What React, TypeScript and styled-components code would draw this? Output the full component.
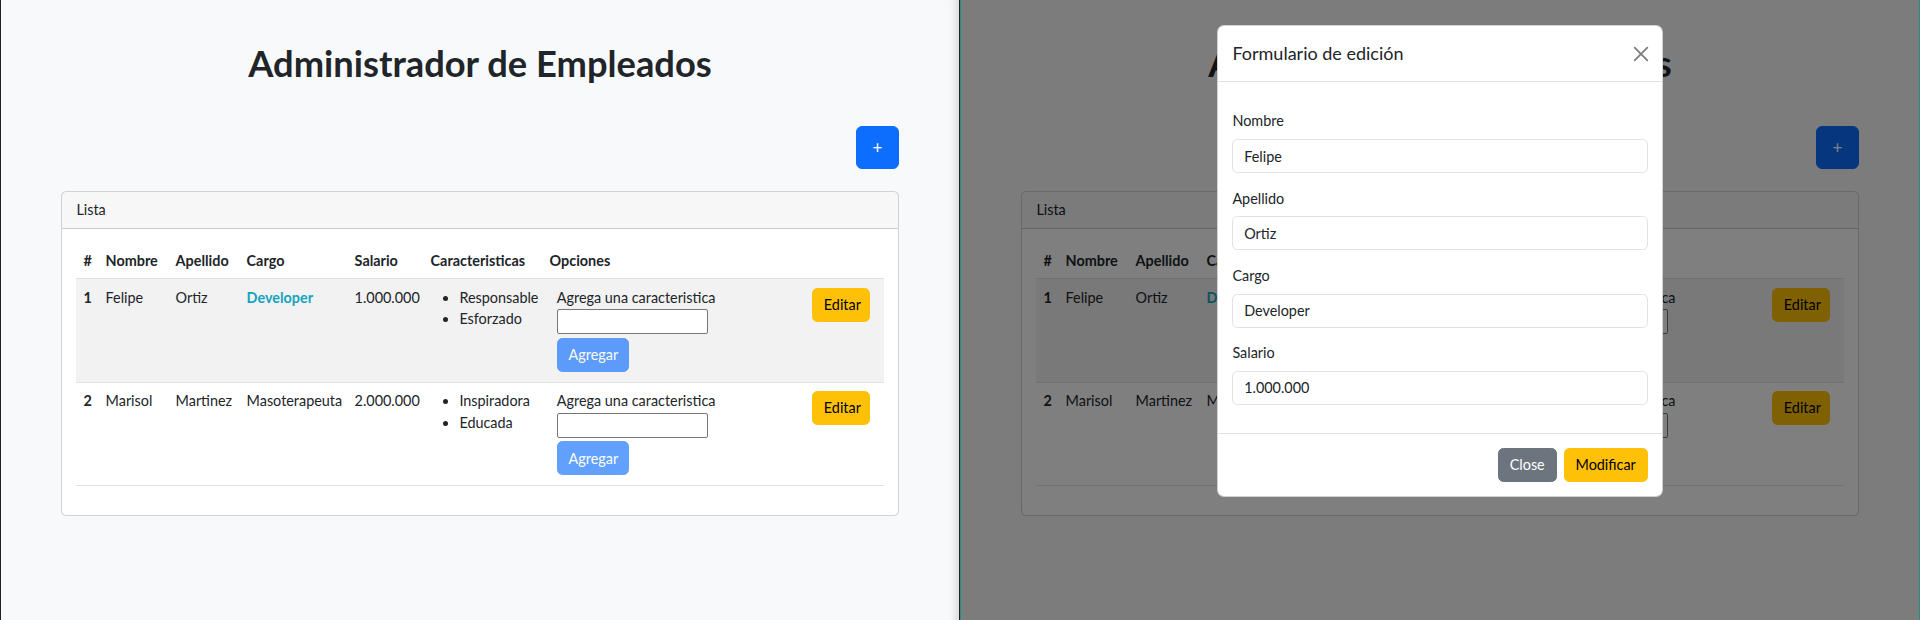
import React from 'react';
import styled, { createGlobalStyle } from 'styled-components';

const GlobalStyle = createGlobalStyle`
  html, body { margin: 0; padding: 0; }
  body {
    font-family: Lato, "Open Sans", sans-serif;
    font-size: 14.4px;
    line-height: 1.5;
    color: #212529;
    background: #ffffff;
  }
  *, *::before, *::after { box-sizing: border-box; }
`;

type Employee = {
  id: number;
  nombre: string;
  apellido: string;
  cargo: string;
  highlight: boolean;
  salario: string;
  caracteristicas: string[];
};

const employees: Employee[] = [
  { id: 1, nombre: 'Felipe', apellido: 'Ortiz', cargo: 'Developer', highlight: true, salario: '1.000.000', caracteristicas: ['Responsable', 'Esforzado'] },
  { id: 2, nombre: 'Marisol', apellido: 'Martinez', cargo: 'Masoterapeuta', highlight: false, salario: '2.000.000', caracteristicas: ['Inspiradora', 'Educada'] },
];

const columns: { label: string; width: number }[] = [
  { label: '#', width: 22 },
  { label: 'Nombre', width: 70 },
  { label: 'Apellido', width: 71 },
  { label: 'Cargo', width: 108 },
  { label: 'Salario', width: 76 },
  { label: 'Caracteristicas', width: 119 },
  { label: 'Opciones', width: 342 },
];

const Screen = styled.div`
  display: flex;
  width: 1920px;
  height: 620px;
  overflow: hidden;
`;

const Pane = styled.div<{ $dimmed?: boolean }>`
  position: relative;
  flex: 0 0 960px;
  height: 620px;
  overflow: hidden;
  background: #f8f9fa;
  border-left: 1px solid ${(p) => (p.$dimmed ? '#1f8f80' : '#202124')};
  border-right: 1px solid ${(p) => (p.$dimmed ? '#1f8f80' : '#202124')};
  box-shadow: ${(p) => (p.$dimmed ? 'none' : 'inset -10px 0 8px -7px rgba(0,0,0,0.14)')};
`;

const Container = styled.div`
  width: 838px;
  margin: 0 auto;
`;

const Title = styled.h1`
  margin: 42px 0 0;
  font-size: 36.3px;
  line-height: 43.2px;
  font-weight: 700;
  text-align: center;
  color: #212529;
`;

const Toolbar = styled.div`
  display: flex;
  justify-content: flex-end;
  margin-top: 41px;
  margin-bottom: 22px;
`;

const AddButton = styled.button`
  width: 43px;
  height: 43px;
  border: 1px solid #0d6efd;
  border-radius: 6px;
  background: #0d6efd;
  color: #ffffff;
  font-family: inherit;
  font-size: 17px;
  line-height: 1;
  padding: 0;
  display: flex;
  align-items: center;
  justify-content: center;
`;

const Card = styled.div`
  background: #ffffff;
  border: 1px solid rgba(0, 0, 0, 0.175);
  border-radius: 5.4px;
  overflow: hidden;
`;

const CardHeader = styled.div`
  padding: 7px 14.4px;
  background: rgba(0, 0, 0, 0.03);
  border-bottom: 1px solid rgba(0, 0, 0, 0.175);
  font-size: 14.4px;
  line-height: 21.6px;
`;

const CardBody = styled.div`
  padding: 14.4px;
`;

const Table = styled.table`
  width: 100%;
  table-layout: fixed;
  border-collapse: collapse;
  margin-bottom: 14.4px;
  font-size: 14.4px;
  line-height: 21.6px;
`;

const HeadCell = styled.th`
  padding: 6.4px 7.2px 7.2px;
  text-align: left;
  vertical-align: bottom;
  font-weight: 700;
  white-space: nowrap;
  border-bottom: 1px solid #dee2e6;
`;

const Row = styled.tr<{ $striped?: boolean }>`
  background: ${(p) => (p.$striped ? '#f2f2f2' : '#ffffff')};
`;

const Cell = styled.td`
  padding: 7.2px;
  vertical-align: top;
  white-space: nowrap;
  border-bottom: 1px solid #dee2e6;
`;

const RowHead = styled.th`
  padding: 7.2px;
  text-align: left;
  vertical-align: top;
  font-weight: 700;
  border-bottom: 1px solid #dee2e6;
`;

const Role = styled.span<{ $accent?: boolean }>`
  font-weight: ${(p) => (p.$accent ? 700 : 400)};
  color: ${(p) => (p.$accent ? '#17a2c0' : 'inherit')};
`;

const TraitList = styled.ul`
  margin: 0;
  padding-left: 28.8px;
`;

const Options = styled.div`
  display: flex;
  justify-content: space-between;
  align-items: flex-start;
  padding: 0 7.2px;
`;

const TraitForm = styled.div`
  display: flex;
  flex-direction: column;
  align-items: flex-start;
`;

const TraitLabel = styled.label`
  display: block;
`;

const TraitInput = styled.input`
  display: block;
  width: 151px;
  height: 25px;
  margin-top: 1px;
  padding: 1px 2px;
  border: 1px solid #767676;
  border-radius: 2px;
  background: #ffffff;
  font-family: inherit;
  font-size: 13px;
`;

const Btn = styled.button<{ $variant: 'primary' | 'warning' | 'secondary'; $disabled?: boolean }>`
  height: 34px;
  padding: 0 10.8px;
  border-radius: 5.4px;
  font-family: inherit;
  font-size: 14.4px;
  line-height: 21.6px;
  white-space: nowrap;
  border: 1px solid
    ${(p) => (p.$variant === 'primary' ? '#0d6efd' : p.$variant === 'warning' ? '#ffc107' : '#6c757d')};
  background: ${(p) => (p.$variant === 'primary' ? '#0d6efd' : p.$variant === 'warning' ? '#ffc107' : '#6c757d')};
  color: ${(p) => (p.$variant === 'warning' ? '#000000' : '#ffffff')};
  opacity: ${(p) => (p.$disabled ? 0.65 : 1)};
`;

const AddTraitButton = styled(Btn)`
  margin: 3.6px 0 3px;
  width: 72px;
`;

const EditButton = styled(Btn)`
  margin-top: 1px;
  width: 58px;
`;

const Backdrop = styled.div`
  position: absolute;
  inset: 0;
  background: rgba(0, 0, 0, 0.5);
  display: flex;
  flex-direction: column;
  align-items: center;
  padding-top: 25px;
`;

const Modal = styled.div`
  width: 446px;
  background: #ffffff;
  border-radius: 7.2px;
  border: 1px solid rgba(0, 0, 0, 0.175);
  overflow: hidden;
`;

const ModalHeader = styled.div`
  display: flex;
  align-items: center;
  justify-content: space-between;
  padding: 14px 14.4px;
  border-bottom: 1px solid #dee2e6;
`;

const ModalTitle = styled.h5`
  margin: 0;
  font-size: 18px;
  font-weight: 400;
  line-height: 27px;
`;

const CloseIcon = styled.button`
  width: 16px;
  height: 16px;
  padding: 0;
  margin-right: -1px;
  border: 0;
  background: transparent;
  opacity: 0.5;
  display: flex;
  align-items: center;
  justify-content: center;
`;

const ModalBody = styled.div`
  padding: 28.4px 14.4px 0.1px;
`;

const Field = styled.div`
  margin-bottom: 14.4px;
`;

const FieldLabel = styled.label`
  display: block;
  margin-bottom: 7.2px;
  font-size: 14.4px;
  line-height: 21.6px;
`;

const FieldInput = styled.input`
  display: block;
  width: 100%;
  height: 34px;
  padding: 5.4px 10.8px;
  border: 1px solid #dee2e6;
  border-radius: 5.4px;
  font-family: inherit;
  font-size: 14.4px;
  line-height: 21.6px;
  color: #212529;
  background: #ffffff;
`;

const ModalFooter = styled.div`
  display: flex;
  justify-content: flex-end;
  align-items: center;
  gap: 7.2px;
  margin-top: 14px;
  padding: 14px 14.4px;
  border-top: 1px solid #dee2e6;
`;

function EmployeePage() {
  return (
    <Container>
      <Title>Administrador de Empleados</Title>
      <Toolbar>
        <AddButton type="button">+</AddButton>
      </Toolbar>
      <Card>
        <CardHeader>Lista</CardHeader>
        <CardBody>
          <Table>
            <colgroup>
              {columns.map((c) => (
                <col key={c.label} style={{ width: c.width }} />
              ))}
            </colgroup>
            <thead>
              <tr>
                {columns.map((c) => (
                  <HeadCell key={c.label}>{c.label}</HeadCell>
                ))}
              </tr>
            </thead>
            <tbody>
              {employees.map((e, i) => (
                <Row key={e.id} $striped={i % 2 === 0}>
                  <RowHead>{e.id}</RowHead>
                  <Cell>{e.nombre}</Cell>
                  <Cell>{e.apellido}</Cell>
                  <Cell>
                    <Role $accent={e.highlight}>{e.cargo}</Role>
                  </Cell>
                  <Cell>{e.salario}</Cell>
                  <Cell>
                    <TraitList>
                      {e.caracteristicas.map((t) => (
                        <li key={t}>{t}</li>
                      ))}
                    </TraitList>
                  </Cell>
                  <Cell>
                    <Options>
                      <TraitForm>
                        <TraitLabel>Agrega una caracteristica</TraitLabel>
                        <TraitInput type="text" readOnly />
                        <AddTraitButton type="button" $variant="primary" $disabled>
                          Agregar
                        </AddTraitButton>
                      </TraitForm>
                      <EditButton type="button" $variant="warning">
                        Editar
                      </EditButton>
                    </Options>
                  </Cell>
                </Row>
              ))}
            </tbody>
          </Table>
        </CardBody>
      </Card>
    </Container>
  );
}

const fields = [
  { label: 'Nombre', value: 'Felipe' },
  { label: 'Apellido', value: 'Ortiz' },
  { label: 'Cargo', value: 'Developer' },
  { label: 'Salario', value: '1.000.000' },
];

function EditModal() {
  return (
    <Backdrop>
      <Modal>
        <ModalHeader>
          <ModalTitle>Formulario de edición</ModalTitle>
          <CloseIcon type="button" aria-label="Close">
            <svg width="16" height="16" viewBox="0 0 16 16" fill="#000">
              <path d="M.293.293a1 1 0 0 1 1.414 0L8 6.586 14.293.293a1 1 0 1 1 1.414 1.414L9.414 8l6.293 6.293a1 1 0 0 1-1.414 1.414L8 9.414l-6.293 6.293a1 1 0 0 1-1.414-1.414L6.586 8 .293 1.707a1 1 0 0 1 0-1.414z" transform="translate(0.8 0.8) scale(0.9)" />
            </svg>
          </CloseIcon>
        </ModalHeader>
        <ModalBody>
          {fields.map((f) => (
            <Field key={f.label}>
              <FieldLabel>{f.label}</FieldLabel>
              <FieldInput type="text" defaultValue={f.value} />
            </Field>
          ))}
        </ModalBody>
        <ModalFooter>
          <Btn type="button" $variant="secondary">Close</Btn>
          <Btn type="button" $variant="warning">Modificar</Btn>
        </ModalFooter>
      </Modal>
    </Backdrop>
  );
}

export default function App() {
  return (
    <>
      <GlobalStyle />
      <Screen>
        <Pane>
          <EmployeePage />
        </Pane>
        <Pane $dimmed>
          <EmployeePage />
          <EditModal />
        </Pane>
      </Screen>
    </>
  );
}
